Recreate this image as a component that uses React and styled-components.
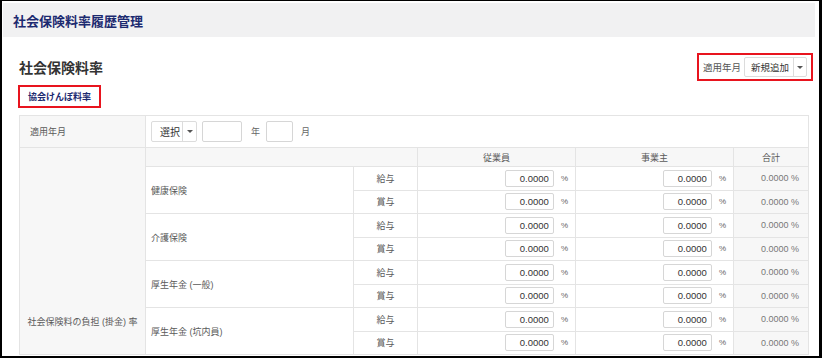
import React from 'react';
import styled, { createGlobalStyle } from 'styled-components';

const Global = createGlobalStyle`
  html, body { margin: 0; padding: 0; background: #fff; }
  body { font-family: "Liberation Sans", "Noto Sans CJK JP", sans-serif; }
  * { box-sizing: border-box; }
`;

const Frame = styled.div`
  width: 822px;
  height: 358px;
  border-style: solid;
  border-color: #000;
  border-width: 1px 3px 2px 2px;
  padding: 2px 4px 0 1px;
  overflow: hidden;
  background: #fff;
  display: flex;
  flex-direction: column;
`;

const Header = styled.div`
  height: 34px;
  flex: none;
  background: #f1f1f2;
  display: flex;
  align-items: center;
  padding-left: 10px;
  font-size: 13px;
  font-weight: bold;
  color: #1c2a70;
`;

const Content = styled.div`
  padding: 0 7px 0 16px;
  display: flex;
  flex-direction: column;
`;

const TitleRow = styled.div`
  margin-top: 16px;
  height: 28px;
  display: flex;
  justify-content: space-between;
  align-items: center;
`;

const PageTitle = styled.h2`
  margin: 0;
  font-size: 14px;
  font-weight: bold;
  color: #333;
`;

const Highlight = styled.div`
  border: 2px solid #e8141e;
  display: flex;
  align-items: center;
`;

const PeriodBox = styled(Highlight)`
  height: 28px;
  width: 116px;
  margin-right: -5px;
  padding: 0 3px 0 4px;
  gap: 3px;
`;

const SmallLabel = styled.span`
  font-size: 9.5px;
  color: #555;
  white-space: nowrap;
`;

const Select = styled.div`
  display: flex;
  align-items: stretch;
  height: ${p => p.$h}px;
  width: ${p => p.$w}px;
  border: 1px solid #dcdcdc;
  border-radius: 2px;
  background: #fff;
  font-size: ${p => p.$fs}px;
  color: #333;
  flex: none;
`;

const SelectText = styled.div`
  flex: 1;
  display: flex;
  align-items: center;
  padding-left: ${p => p.$pl}px;
  white-space: nowrap;
`;

const Caret = styled.div`
  width: ${p => p.$w}px;
  border-left: 1px solid #dcdcdc;
  display: flex;
  align-items: center;
  justify-content: center;
  &::after {
    content: "";
    border-left: 3px solid transparent;
    border-right: 3px solid transparent;
    border-top: 3px solid #555;
  }
`;

const TabBox = styled(Highlight)`
  align-self: flex-start;
  margin-top: 4px;
  margin-left: -1px;
  height: 23px;
  padding: 0 8px;
  font-size: 9px;
  font-weight: bold;
  color: #1c2a70;
  white-space: nowrap;
`;

const Table = styled.table`
  margin-top: 7px;
  width: 789px;
  border-collapse: collapse;
  table-layout: fixed;
  font-size: 9px;
  color: #5a5a5a;
`;

const Cell = styled.td`
  border: 1px solid #e4e4e4;
  padding: 0;
  vertical-align: middle;
`;

const LabelCell = styled(Cell)`
  background: #f7f7f7;
  padding-left: 10px;
`;

const SpanLabelCell = styled(Cell)`
  background: #f7f7f7;
  text-align: center;
  vertical-align: bottom;
  padding-bottom: 26px;
`;

const PeriodCell = styled(Cell)`
  height: 32px;
  padding-left: 5px;
`;

const PeriodInputs = styled.div`
  display: flex;
  align-items: center;
`;

const TextInput = styled.div`
  width: ${p => p.$w}px;
  height: ${p => p.$h}px;
  border: 1px solid #d6d6d6;
  border-radius: 2px;
  background: #fff;
  margin-left: ${p => p.$ml || 0}px;
  display: flex;
  align-items: center;
  justify-content: flex-end;
  padding-right: 4px;
  font-size: 9.5px;
  color: #333;
  flex: none;
`;

const Unit = styled.span`
  margin-left: ${p => p.$ml}px;
  color: #666;
  font-size: ${p => p.$fs || 9}px;
`;

const HeadCell = styled(Cell)`
  height: 19px;
  background: #f7f7f7;
  text-align: center;
`;

const SubCell = styled(Cell)`
  padding-left: 5px;
`;

const TypeCell = styled(Cell)`
  height: 23.5px;
  text-align: center;
`;

const RateCell = styled(Cell)`
  padding-right: 7px;
`;

const RateInner = styled.div`
  display: flex;
  align-items: center;
  justify-content: flex-end;
`;

const TotalCell = styled(Cell)`
  background: #f7f7f7;
  text-align: right;
  padding-right: 9px;
  color: #777;
`;

const groups = ['健康保険', '介護保険', '厚生年金 (一般)', '厚生年金 (坑内員)'];

const Rate = () => (
  <RateCell>
    <RateInner>
      <TextInput $w={49} $h={17}>0.0000</TextInput>
      <Unit $ml={7} $fs={8}>%</Unit>
    </RateInner>
  </RateCell>
);

export default function App() {
  const totalRows = groups.length * 2 + 1;
  return (
    <>
      <Global />
      <Frame>
        <Header>社会保険料率履歴管理</Header>
        <Content>
          <TitleRow>
            <PageTitle>社会保険料率</PageTitle>
            <PeriodBox>
              <SmallLabel>適用年月</SmallLabel>
              <Select $w={63} $h={20} $fs={9.5}>
                <SelectText $pl={6}>新規追加</SelectText>
                <Caret $w={13} />
              </Select>
            </PeriodBox>
          </TitleRow>
          <TabBox>協会けんぽ料率</TabBox>
          <Table>
            <colgroup>
              <col style={{ width: 126 }} />
              <col style={{ width: 208 }} />
              <col style={{ width: 64 }} />
              <col style={{ width: 158 }} />
              <col style={{ width: 158 }} />
              <col style={{ width: 75 }} />
            </colgroup>
            <tbody>
              <tr>
                <LabelCell>適用年月</LabelCell>
                <PeriodCell colSpan={5}>
                  <PeriodInputs>
                    <Select $w={46} $h={21} $fs={10}>
                      <SelectText $pl={8}>選択</SelectText>
                      <Caret $w={14} />
                    </Select>
                    <TextInput $w={40} $h={21} $ml={5} />
                    <Unit $ml={9}>年</Unit>
                    <TextInput $w={27} $h={21} $ml={6} />
                    <Unit $ml={8}>月</Unit>
                  </PeriodInputs>
                </PeriodCell>
              </tr>
              <tr>
                <SpanLabelCell rowSpan={totalRows}>社会保険料の負担 (掛金) 率</SpanLabelCell>
                <HeadCell colSpan={2} />
                <HeadCell>従業員</HeadCell>
                <HeadCell>事業主</HeadCell>
                <HeadCell>合計</HeadCell>
              </tr>
              {groups.map(g => (
                <React.Fragment key={g}>
                  <tr>
                    <SubCell rowSpan={2}>{g}</SubCell>
                    <TypeCell>給与</TypeCell>
                    <Rate />
                    <Rate />
                    <TotalCell>0.0000 %</TotalCell>
                  </tr>
                  <tr>
                    <TypeCell>賞与</TypeCell>
                    <Rate />
                    <Rate />
                    <TotalCell>0.0000 %</TotalCell>
                  </tr>
                </React.Fragment>
              ))}
            </tbody>
          </Table>
        </Content>
      </Frame>
    </>
  );
}
